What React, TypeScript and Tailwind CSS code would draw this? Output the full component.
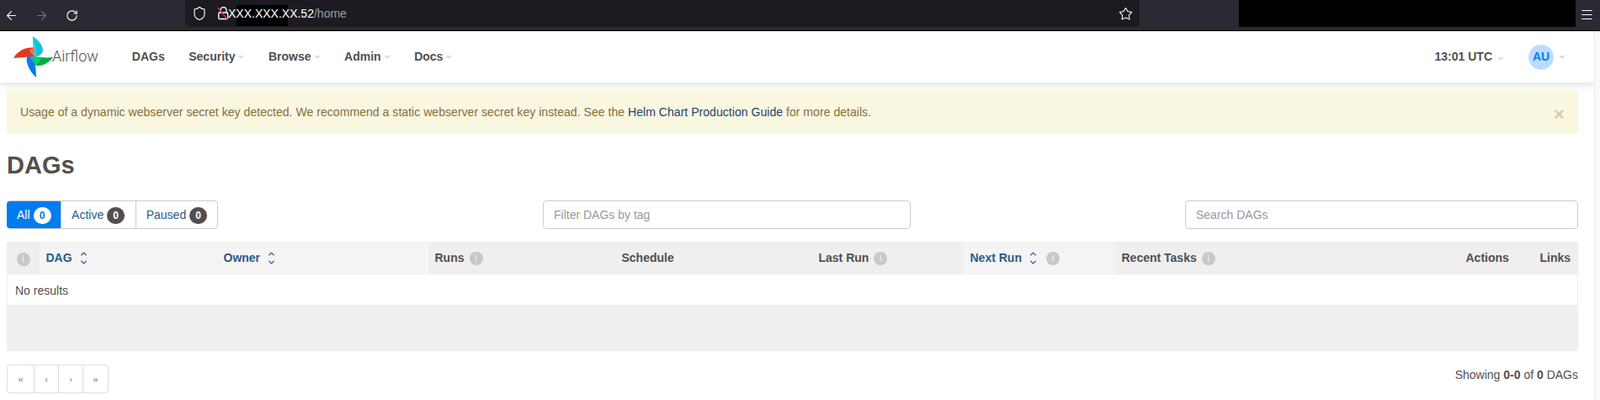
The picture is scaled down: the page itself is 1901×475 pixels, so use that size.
import { ArrowLeft, ArrowRight, RotateCw, Shield, Star, Menu, X, ChevronUp, ChevronDown } from "lucide-react";

const Caret = () => (
  <span className="ml-[3px] inline-block h-0 w-0 border-x-[4px] border-t-[4px] border-x-transparent border-t-[#e6d8ea]" />
);

const InfoIcon = ({ className = "ml-[6px]" }: { className?: string }) => (
  <span className={`${className} inline-flex h-4 w-4 items-center justify-center rounded-full bg-[#c8c8c8] text-[11px] font-bold leading-none text-[#e6e6e6]`}>
    i
  </span>
);

const SortIcon = () => (
  <span className="ml-[8px] inline-flex flex-col text-[#2e5a88]">
    <ChevronUp size={11} strokeWidth={3} className="-mb-[1px]" />
    <ChevronDown size={11} strokeWidth={3} />
  </span>
);

const Logo = () => (
  <svg width="48" height="51" viewBox="0 0 48 51" className="shrink-0">
    <path d="M24 25 L23 1 C30 6 34 11 35 17 C35 21 31 25 27 25 Z" fill="#0fc4d8" />
    <path d="M24 25 L23 1 C25 9 28 17 27 25 Z" fill="#22dbe8" />
    <path d="M25 25 L25 15 C17 13 6 17 0 27 C8 26 18 26 25 25 Z" fill="#e43921" />
    <path d="M25 25 L25 15 C23 15 21 16 19 17 C20 20 22 23 25 25 Z" fill="#f2735e" />
    <path d="M24 25 L16 25 C14 33 20 44 27 50 C27 42 26 33 24 25 Z" fill="#0a7bee" />
    <path d="M24 25 L20 25 C20 28 22 31 25 33 Z" fill="#17a5ff" />
    <path d="M24 25 L25 35 C33 38 42 33 47 26 C39 27 31 26 24 25 Z" fill="#00ad46" />
    <path d="M24 25 L25 35 C28 35 31 33 33 27 C30 27 27 26 24 25 Z" fill="#04d659" />
  </svg>
);

const NavItem = ({ label, caret = true }: { label: string; caret?: boolean }) => (
  <span className="inline-flex items-center text-[14px] font-bold text-[#51504f]">
    {label}
    {caret && <Caret />}
  </span>
);

const Tab = ({ label, active = false }: { label: string; active?: boolean }) => (
  <span
    className={`inline-flex h-full items-center gap-[4px] pl-[12px] pr-[12.5px] pt-[1px] text-[14px] ${
      active ? "-m-px h-[34px] rounded-l-[4px] bg-[#017cee] text-white" : "border-l border-[#ccc] text-[#2e5a88]"
    }`}
  >
    {label}
    <span
      className={`inline-flex h-[20px] w-[21px] items-center justify-center rounded-full text-[12px] font-bold ${
        active ? "bg-white text-[#017cee]" : "bg-[#51504f] text-white"
      }`}
    >
      0
    </span>
  </span>
);

const columns = ["w-[38px]", "w-[211px]", "w-[251px]", "w-[222px]", "w-[234px]", "w-[180px]", "w-[180px]", "w-[409px]", "w-[88px]", "w-[53px]"];

export default function App() {
  return (
    <div className="h-[475px] w-[1901px] overflow-hidden bg-white font-['Liberation_Sans',Arial,sans-serif] text-[14px] text-[#51504f]">
      {/* browser toolbar */}
      <div className="flex h-[37px] items-start border-b border-black bg-[#2b2a33] text-white">
        <div className="flex h-9 w-[220px] items-center">
          <ArrowLeft size={17} strokeWidth={1.6} className="ml-[5px]" />
          <ArrowRight size={17} strokeWidth={1.6} className="ml-[19px] text-[#77767d]" />
          <RotateCw size={15} strokeWidth={1.8} className="ml-[20px]" />
        </div>
        <div className="relative flex h-[32px] w-[1134px] items-center rounded-b-[5px] bg-[#1c1b22]">
          <span className="absolute left-[61px] top-[6px] h-[25px] w-[61px] bg-black" />
          <Shield size={18} strokeWidth={1.5} className="ml-[8px]" />
          <svg width="14" height="16" viewBox="0 0 14 16" className="relative ml-[12px]" fill="none">
            <path d="M4 7 V4 a3.5 3.5 0 0 1 7 0 V7" stroke="#fff" strokeWidth="1.3" />
            <rect x="1.7" y="7" width="11" height="7.5" rx="1.2" stroke="#fff" strokeWidth="1.3" />
            <path d="M0.5 1 L12.5 15" stroke="#e22850" strokeWidth="1.3" />
          </svg>
          <span className="relative ml-[-1px] text-[14px]">
            XXX.XXX.XX.52<span className="text-[#9d9ca1]">/home</span>
          </span>
          <Star size={17} strokeWidth={1.5} className="ml-auto mr-[8px]" />
        </div>
        <div className="ml-[118px] h-[32px] w-[400px] bg-black" />
        <Menu size={17} strokeWidth={1.6} className="ml-[5px] mt-[9px]" />
      </div>

      <div className="flex h-[438px]">
        <div className="w-[1894px] shrink-0">
          {/* navbar */}
          <nav className="flex h-[61px] items-center bg-white pl-[16px] pr-[34px] shadow-[0_3px_8px_rgba(0,0,0,0.12)]">
            <Logo />
            <span className="-ml-[2px] mb-[2px] font-['Roboto',sans-serif] text-[18px] font-light leading-none text-[#51504f]">
              Airflow
            </span>
            <div className="ml-[40px] flex items-center gap-[28.5px]">
              <NavItem label="DAGs" caret={false} />
              <NavItem label="Security" />
              <NavItem label="Browse" />
              <NavItem label="Admin" />
              <NavItem label="Docs" />
            </div>
            <div className="ml-auto flex items-center">
              <span className="inline-flex items-center text-[14px] font-bold">
                13:01 UTC<span className="ml-[3px]"><Caret /></span>
              </span>
              <span className="ml-[29px] flex h-[30px] w-[30px] items-center justify-center rounded-full bg-[#bcdcff] text-[14px] font-bold text-[#017cee]">
                AU
              </span>
              <span className="ml-[3px] flex"><Caret /></span>
            </div>
          </nav>

          <main className="pl-2 pr-[19px] pt-[9px]">
            {/* alert */}
            <div className="flex h-[52px] items-center justify-between rounded-[4px] bg-[#f9f7e0] pl-[16px] pr-[15px] text-[14.1px] text-[#8a6d3b]">
              <span className="pt-[2px]">
                Usage of a dynamic webserver secret key detected. We recommend a static webserver secret key instead. See the{" "}
                <span className="text-[#1b4571]">Helm Chart Production Guide</span> for more details.
              </span>
              <X size={15} strokeWidth={4} className="mt-[5px] text-[#d5cdae]" />
            </div>

            <h2 className="mt-[20px] text-[29px] font-bold leading-[34px]">DAGs</h2>

            {/* filters */}
            <div className="mt-[25px] flex h-[34px] items-stretch">
              <div className="flex w-[251px] items-center rounded-[4px] border border-[#ccc]">
                <Tab label="All" active />
                <Tab label="Active" />
                <Tab label="Paused" />
              </div>
              <input
                placeholder="Filter DAGs by tag"
                className="ml-[386px] w-[437px] rounded-[4px] border border-[#ccc] px-[12px] pt-[1px] text-[14px] outline-none placeholder:text-[#999]"
              />
              <input
                placeholder="Search DAGs"
                className="ml-auto w-[467px] rounded-[4px] border border-[#ccc] px-[12px] pt-[1px] text-[14px] outline-none placeholder:text-[#999]"
              />
            </div>

            {/* table */}
            <div className="mt-[15px] bg-[#efefef]">
              <table className="w-full table-fixed border-collapse">
                <colgroup>
                  {columns.map((w, i) => (
                    <col key={i} className={w} />
                  ))}
                </colgroup>
                <thead>
                  <tr className="h-[39px] text-left text-[14px] font-bold">
                    <th className="pl-[11px]"><InfoIcon className="" /></th>
                    <th className="bg-[#f4f4f4] px-2 text-[#2e5a88]"><span className="inline-flex items-center">DAG<SortIcon /></span></th>
                    <th className="bg-[#f4f4f4] px-2 text-[#2e5a88]"><span className="inline-flex items-center">Owner<SortIcon /></span></th>
                    <th className="px-2"><span className="inline-flex items-center">Runs<InfoIcon /></span></th>
                    <th className="px-2">Schedule</th>
                    <th className="px-2"><span className="inline-flex items-center">Last Run<InfoIcon /></span></th>
                    <th className="bg-[#f4f4f4] px-2 text-[#2e5a88]"><span className="inline-flex items-center">Next Run<SortIcon /><InfoIcon className="ml-[10px]" /></span></th>
                    <th className="px-2"><span className="inline-flex items-center">Recent Tasks<InfoIcon /></span></th>
                    <th className="px-2">Actions</th>
                    <th className="px-2">Links</th>
                  </tr>
                </thead>
                <tbody>
                  <tr className="h-[36px] bg-white">
                    <td colSpan={10} className="border-x border-[#eee] px-[9px] pt-[2px] text-[14px]">No results</td>
                  </tr>
                </tbody>
              </table>
              <div className="h-[55px]" />
            </div>

            {/* pagination */}
            <div className="mt-[16px] flex items-start justify-between">
              <div className="flex h-[34px] w-[121px] items-center rounded-[4px] border border-[#ddd] text-[11px] text-[#777]">
                <span className="flex h-full w-[31px] items-center justify-center">«</span>
                <span className="flex h-full w-[29px] items-center justify-center border-l border-[#ddd]">‹</span>
                <span className="flex h-full w-[29px] items-center justify-center border-l border-[#ddd]">›</span>
                <span className="flex h-full flex-1 items-center justify-center border-l border-[#ddd]">»</span>
              </div>
              <p className="mt-[2px] text-[14px]">
                Showing <b>0-0</b> of <b>0</b> DAGs
              </p>
            </div>
          </main>
        </div>
        <div className="flex-1 border-l border-[#e8e8e8] bg-[#fafafa]" />
      </div>
    </div>
  );
}
